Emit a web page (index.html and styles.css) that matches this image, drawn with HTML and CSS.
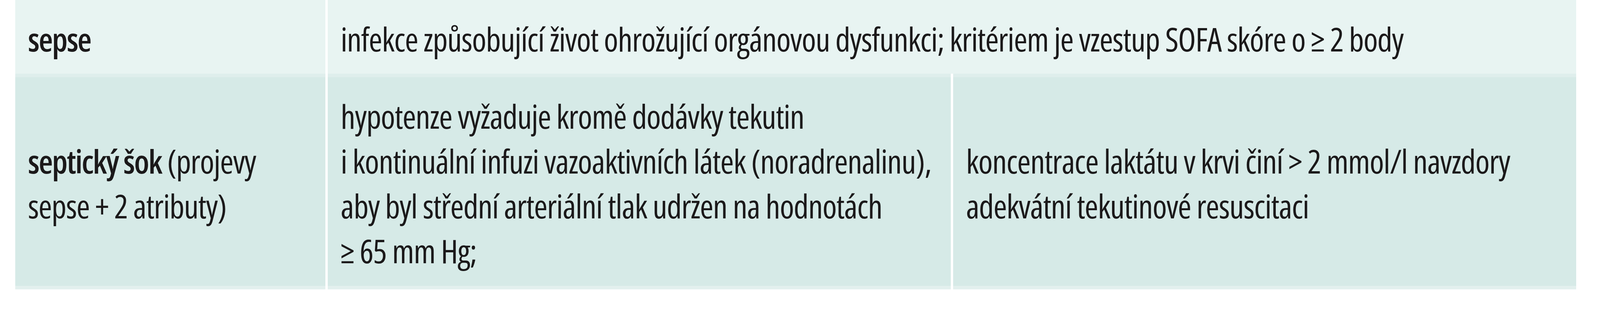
FILE: index.html
```html
<!DOCTYPE html>
<html lang="cs">
<head>
<meta charset="utf-8">
<link rel="stylesheet" href="styles.css">
</head>
<body>
<div class="grid">
  <div class="cell r1"><div><b>sepse</b></div></div>
  <div class="cell r1 span"><div>infekce způsobující život ohrožující orgánovou dysfunkci; kritériem je vzestup SOFA skóre o ≥ 2 body</div></div>
  <div class="cell r2"><div><b>septický šok</b> (projevy<br>sepse + 2 atributy)</div></div>
  <div class="cell r2"><div>hypotenze vyžaduje kromě dodávky tekutin<br>i kontinuální infuzi vazoaktivních látek (noradrenalinu),<br>aby byl střední arteriální tlak udržen na hodnotách<br>≥ 65 mm Hg;</div></div>
  <div class="cell r2"><div>koncentrace laktátu v krvi činí &gt; 2 mmol/l navzdory<br>adekvátní tekutinové resuscitaci</div></div>
</div>
</body>
</html>
```
FILE: styles.css
```css
html, body {
  margin: 0;
  padding: 0;
  background: #ffffff;
}
.grid {
  display: grid;
  grid-template-columns: 19.395vw 38.938vw 38.938vw;
  column-gap: 0.147vw;
  width: 98.513vw;
  margin-left: 0.948vw;
  background: #ffffff;
  font-family: "Open Sans", "Noto Sans", sans-serif;
  font-stretch: 75%;
  font-size: 84px;
  letter-spacing: -1.35px;
  line-height: 115px;
  color: #1b191a;
}
.cell {
  padding: 42px 0.3vw 32px 0.8vw;
  display: flex;
  flex-direction: column;
  justify-content: center;
  white-space: nowrap;
  overflow: hidden;
}
.cell b {
  font-weight: 640;
  letter-spacing: -2.45px;
}
.r1 {
  background: #e8f4f2;
}
.span {
  grid-column: 2 / span 2;
}
.r2 {
  background: #d6eae7;
  border-top: 9px solid #dfeeec;
  border-bottom: 9px solid #e3f0ee;
  padding-bottom: 33px;
}
@media (min-width: 5000px) {
  .grid {
    font-stretch: 100%;
    letter-spacing: 1px;
  }
  .cell b {
    letter-spacing: 0;
  }
}
```
